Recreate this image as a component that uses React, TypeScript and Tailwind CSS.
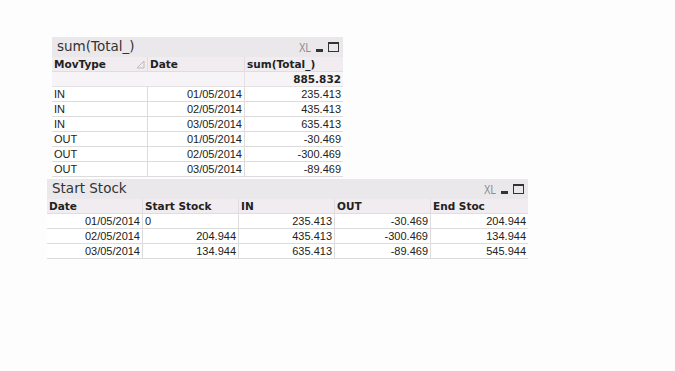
import React from "react";

const font = { fontFamily: '"Liberation Sans", Arial, sans-serif' };
const hfont = { fontFamily: '"DejaVu Sans", Verdana, sans-serif' };

function Caption({ title }: { title: string }) {
  return (
    <div className="flex h-[20px] items-center justify-between bg-[#ebe8eb] pl-[5px] pr-[4px]">
      <span style={hfont} className="text-[13.5px] leading-none text-[#333]">{title}</span>
      <div className="flex items-center gap-[5px]">
        <span className="inline-block w-[12px] origin-left scale-x-[0.75] text-[13px] leading-none text-[#8a8a8a]">XL</span>
        <div className="mt-[6px] h-[3px] w-[7px] bg-[#333]" />
        <div className="h-[10px] w-[11px] border border-t-[2px] border-[#333]" />
      </div>
    </div>
  );
}

type Cell = { t: string; r?: boolean };

function Row({ cells, widths, header, bg }: { cells: Cell[]; widths: string[]; header?: boolean; bg?: string }) {
  return (
    <div className={`flex h-[15px] ${bg ?? "bg-white"}`}>
      {cells.map((c, i) => (
        <div
          key={i}
          style={header ? hfont : undefined}
          className={`${widths[i]} flex h-[15px] shrink-0 items-center overflow-hidden whitespace-nowrap border-b px-[2px] leading-none ${
            i < cells.length - 1 ? "border-r" : ""
          } ${header ? "border-[#e0dce0] text-[10.5px] font-bold" : "border-[#dcdcdc] text-[11px]"} ${
            c.r ? "justify-end" : "justify-start"
          } text-[#222]`}
        >
          {c.t}
        </div>
      ))}
    </div>
  );
}

export default function App() {
  const w1 = ["w-[96px]", "w-[97px]", "w-[98px]"];
  const upper: string[][] = [
    ["IN", "01/05/2014", "235.413"],
    ["IN", "02/05/2014", "435.413"],
    ["IN", "03/05/2014", "635.413"],
    ["OUT", "01/05/2014", "-30.469"],
    ["OUT", "02/05/2014", "-300.469"],
    ["OUT", "03/05/2014", "-89.469"],
  ];
  const w2 = ["w-[96px]", "w-[96px]", "w-[96px]", "w-[96px]", "w-[97px]"];
  const lower: Cell[][] = [
    [{ t: "01/05/2014", r: true }, { t: "0" }, { t: "235.413", r: true }, { t: "-30.469", r: true }, { t: "204.944", r: true }],
    [{ t: "02/05/2014", r: true }, { t: "204.944", r: true }, { t: "435.413", r: true }, { t: "-300.469", r: true }, { t: "134.944", r: true }],
    [{ t: "03/05/2014", r: true }, { t: "134.944", r: true }, { t: "635.413", r: true }, { t: "-89.469", r: true }, { t: "545.944", r: true }],
  ];
  return (
    <div style={font} className="h-[371px] w-[675px] bg-[#fefdfe] pl-[47px] pt-[37px]">
      <div className="ml-[5px] w-[291px]">
        <Caption title="sum(Total_)" />
        <div style={hfont} className="flex h-[15px] bg-[#f0ecf0] text-[10.5px] font-bold leading-none text-[#222]">
          <div className="flex h-[15px] w-[96px] items-center justify-between border-r border-b border-[#e0dce0] px-[2px]">
            <span>MovType</span>
            <svg width="9" height="9" viewBox="0 0 9 9">
              <path d="M8 1 L8 8 L1 8 Z" fill="none" stroke="#bbb" strokeWidth="1" />
            </svg>
          </div>
          <div className="flex h-[15px] w-[97px] items-center border-r border-b border-[#e0dce0] px-[2px]">Date</div>
          <div className="flex h-[15px] w-[98px] items-center border-b border-[#e0dce0] px-[2px]">sum(Total_)</div>
        </div>
        <div className="flex h-[15px] bg-[#f6f4f6]">
          <div className="h-[15px] w-[193px] border-r border-b border-[#e4e0e4]" />
          <div
            style={hfont}
            className="flex h-[15px] w-[98px] items-center justify-end border-b border-[#e4e0e4] px-[2px] text-[10.5px] font-bold leading-none text-[#222]"
          >
            885.832
          </div>
        </div>
        {upper.map((r, i) => (
          <Row key={i} widths={w1} cells={[{ t: r[0] }, { t: r[1], r: true }, { t: r[2], r: true }]} />
        ))}
      </div>
      <div className="mt-[2px] w-[481px]">
        <Caption title="Start Stock" />
        <Row
          header
          bg="bg-[#f0ecf0]"
          widths={w2}
          cells={[{ t: "Date" }, { t: "Start Stock" }, { t: "IN" }, { t: "OUT" }, { t: "End Stoc" }]}
        />
        {lower.map((r, i) => (
          <Row key={i} widths={w2} cells={r} />
        ))}
      </div>
    </div>
  );
}
